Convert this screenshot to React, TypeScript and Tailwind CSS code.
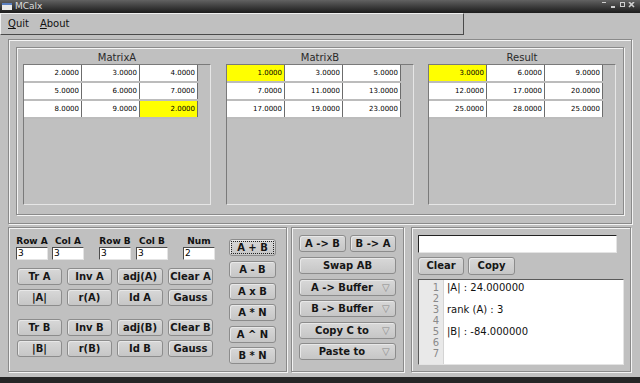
import React from "react"

const matA = [
  ["2.0000", "3.0000", "4.0000"],
  ["5.0000", "6.0000", "7.0000"],
  ["8.0000", "9.0000", "2.0000"],
]
const matB = [
  ["1.0000", "3.0000", "5.0000"],
  ["7.0000", "11.0000", "13.0000"],
  ["17.0000", "19.0000", "23.0000"],
]
const matC = [
  ["3.0000", "6.0000", "9.0000"],
  ["12.0000", "17.0000", "20.0000"],
  ["25.0000", "28.0000", "25.0000"],
]

const logLines = ["|A| : 24.000000", "", "rank (A) : 3", "", "|B| : -84.000000", "", ""]

// engraved frame like FLTK's FL_ENGRAVED_FRAME
const engraved = "border border-[#8a8a8a] shadow-[1px_1px_0_#f4f4f4,inset_1px_1px_0_#f4f4f4]"

function Btn({
  children,
  className = "",
  focus = false,
  menu = false,
}: {
  children: React.ReactNode
  className?: string
  focus?: boolean
  menu?: boolean
}) {
  return (
    <div
      className={`relative flex items-center rounded-[3px] border border-[#8c8c8c] bg-linear-to-b from-[#d8d8d8] to-[#c6c6c6] text-[10px] font-bold leading-none text-[#161616] shadow-[inset_1px_1px_0_#e8e8e8] ${className}`}
    >
      {menu ? (
        <>
          <span className="flex-1 text-center pl-[2px]">{children}</span>
          <span className="w-[13px] text-[10px] font-normal text-[#8a8a8a]">▽</span>
        </>
      ) : (
        <span className="flex-1 text-center">{children}</span>
      )}
      {focus && <div className="absolute inset-[1px] border border-dotted border-[#222]" />}
    </div>
  )
}

function Field({ value, className = "" }: { value: string; className?: string }) {
  return (
    <div
      className={`flex items-center bg-white border border-t-[#4c4c4c] border-l-[#4c4c4c] border-b-[#e4e4e4] border-r-[#e4e4e4] pl-[1px] text-[9px] leading-none text-black ${className}`}
    >
      {value}
    </div>
  )
}

function Matrix({ title, data, hl }: { title: string; data: string[][]; hl: [number, number] }) {
  return (
    <div className="flex flex-col w-[188px]">
      <div className="h-[16px] flex items-end justify-center pb-[1px] text-[10px] leading-none text-[#2a2a2a]">{title}</div>
      <div className="h-[141px] border border-t-[#7a7a7a] border-l-[#7a7a7a] border-b-[#e6e6e6] border-r-[#e6e6e6]">
        {data.map((row, r) => (
          <div key={r} className="flex h-[18px] w-[174px] border-b-2 border-[#bcbcbc]">
            {row.map((v, c) => (
              <div
                key={c}
                className={`w-[58px] flex items-center justify-end pr-[2px] border-r border-[#6c6c6c] text-[7px] leading-none text-black ${
                  hl[0] === r && hl[1] === c ? "bg-[#ffff00]" : "bg-white"
                }`}
              >
                {v}
              </div>
            ))}
          </div>
        ))}
      </div>
    </div>
  )
}

function Labeled({ label, value, className = "" }: { label: string; value: string; className?: string }) {
  return (
    <div className={`flex flex-col items-center w-[32px] ${className}`}>
      <div className="h-[9px] text-[9px] font-bold leading-none text-[#111] whitespace-nowrap">{label}</div>
      <Field value={value} className="mt-[1px] w-[32px] h-[13px]" />
    </div>
  )
}

export default function App() {
  return (
    <div className="w-[640px] h-[383px] flex flex-col bg-[#c0c0c0] font-['DejaVu_Sans',sans-serif] overflow-hidden">
      {/* Title bar */}
      <div className="h-[13px] flex items-center bg-linear-to-b from-[#626262] to-[#1c1c1c]">
        <svg width="10" height="7" viewBox="0 0 10 7" className="ml-[2px]">
          <rect x="0" y="0" width="10" height="7" fill="#e8e8e8" />
          <rect x="0" y="0" width="10" height="2" fill="#5a7fc0" />
        </svg>
        <span className="ml-[3px] text-[9px] leading-none text-[#dcdcdc]">MCalx</span>
        <svg width="36" height="9" viewBox="0 0 36 9" className="ml-auto mr-[4px]">
          <rect x="2" y="0" width="4" height="1" fill="#cfcfcf" />
          <rect x="11" y="4" width="4" height="2" fill="#cfcfcf" />
          <rect x="20.5" y="0.5" width="4" height="4" fill="none" stroke="#cfcfcf" />
          <path d="M29 0 L34 5 M34 0 L29 5" stroke="#cfcfcf" strokeWidth="1.6" />
        </svg>
      </div>

      {/* Menu bar */}
      <div className="h-[22px] flex">
        <div className="w-[464px] flex items-center border border-t-[#efefef] border-l-[#efefef] border-b-[#4a4a4a] border-r-[#4a4a4a] text-[10px] leading-none text-[#111]">
          <span className="ml-[7px]">
            <span className="underline">Q</span>uit
          </span>
          <span className="ml-[11px]">
            <span className="underline">A</span>bout
          </span>
        </div>
      </div>

      {/* Matrices */}
      <div className={`mt-[4px] ml-[8px] w-[624px] h-[185px] p-[7px] ${engraved}`}>
        <div className={`h-[168px] flex gap-[15px] pl-[6px] ${engraved}`}>
          <Matrix title="MatrixA" data={matA} hl={[2, 2]} />
          <Matrix title="MatrixB" data={matB} hl={[0, 0]} />
          <div className="-ml-[1px]">
            <Matrix title="Result" data={matC} hl={[0, 0]} />
          </div>
        </div>
      </div>

      {/* Lower controls */}
      <div className="mt-[3px] ml-[8px] h-[145px] flex">
        {/* Left: sizes and single-matrix ops */}
        <div className={`w-[279px] h-full flex ${engraved}`}>
          <div className="w-[206px] pl-[7px] pt-[9px] flex flex-col">
            <div className="flex">
              <Labeled label="Row A" value="3" />
              <Labeled label="Col A" value="3" className="ml-[4px]" />
              <Labeled label="Row B" value="3" className="ml-[15px]" />
              <Labeled label="Col B" value="3" className="ml-[5px]" />
              <Labeled label="Num" value="2" className="ml-[15px]" />
            </div>
            <div className="ml-[1px] mt-[8px] grid grid-cols-[45px_45px_46px_45px] gap-x-[5px] gap-y-[4px]">
              <Btn className="h-[17px]">Tr A</Btn>
              <Btn className="h-[17px]">Inv A</Btn>
              <Btn className="h-[17px]">adj(A)</Btn>
              <Btn className="h-[17px]">Clear A</Btn>
              <Btn className="h-[17px]">|A|</Btn>
              <Btn className="h-[17px]">r(A)</Btn>
              <Btn className="h-[17px]">Id A</Btn>
              <Btn className="h-[17px]">Gauss</Btn>
            </div>
            <div className="ml-[1px] mt-[13px] grid grid-cols-[45px_45px_46px_45px] gap-x-[5px] gap-y-[4px]">
              <Btn className="h-[17px]">Tr B</Btn>
              <Btn className="h-[17px]">Inv B</Btn>
              <Btn className="h-[17px]">adj(B)</Btn>
              <Btn className="h-[17px]">Clear B</Btn>
              <Btn className="h-[17px]">|B|</Btn>
              <Btn className="h-[17px]">r(B)</Btn>
              <Btn className="h-[17px]">Id B</Btn>
              <Btn className="h-[17px]">Gauss</Btn>
            </div>
          </div>
          <div className="ml-[14px] pt-[11px] flex flex-col w-[47px]">
            <Btn focus className="h-[17px]">A + B</Btn>
            <Btn className="h-[17px] mt-[5px]">A - B</Btn>
            <Btn className="h-[17px] mt-[5px]">A x B</Btn>
            <Btn className="h-[17px] mt-[4px]">A * N</Btn>
            <Btn className="h-[17px] mt-[5px]">A ^ N</Btn>
            <Btn className="h-[17px] mt-[4px]">B * N</Btn>
          </div>
        </div>

        {/* Middle: copy / buffer */}
        <div className={`ml-[4px] w-[113px] h-full pl-[7px] pt-[7px] flex flex-col ${engraved}`}>
          <div className="flex gap-[4px] w-[97px]">
            <Btn className="h-[17px] w-[47px]">A -&gt; B</Btn>
            <Btn className="h-[17px] w-[46px]">B -&gt; A</Btn>
          </div>
          <Btn className="h-[17px] w-[97px] mt-[5px]">Swap AB</Btn>
          <Btn menu className="h-[17px] w-[97px] mt-[5px]">A -&gt; Buffer</Btn>
          <Btn menu className="h-[17px] w-[97px] mt-[4px]">B -&gt; Buffer</Btn>
          <Btn menu className="h-[17px] w-[97px] mt-[5px]">Copy C to</Btn>
          <Btn menu className="h-[17px] w-[97px] mt-[4px]">Paste to</Btn>
        </div>

        {/* Right: output log */}
        <div className={`ml-[7px] w-[220px] h-full pl-[6px] pt-[7px] flex flex-col ${engraved}`}>
          <Field value="" className="w-[199px] h-[18px] border-t-[#222] border-l-[#222]" />
          <div className="flex gap-[4px] mt-[4px]">
            <Btn className="h-[18px] w-[46px]">Clear</Btn>
            <Btn className="h-[18px] w-[47px]">Copy</Btn>
          </div>
          <div className="mt-[4px] w-[206px] h-[86px] flex bg-white border border-t-[#5a5a5a] border-l-[#5a5a5a] border-b-[#e4e4e4] border-r-[#e4e4e4]">
            <div className="w-[25px] bg-[#e9e9e9] border-r border-[#d4d4d4] pt-[2px] pr-[4px] flex flex-col items-end text-[10px] leading-[11px] text-[#8a8a8a]">
              {logLines.map((_, i) => (
                <div key={i}>{i + 1}</div>
              ))}
            </div>
            <div className="pl-[3px] pt-[2px] flex flex-col text-[10px] leading-[11px] text-[#111]">
              {logLines.map((l, i) => (
                <div key={i} className="h-[11px] whitespace-pre">
                  {l}
                </div>
              ))}
            </div>
          </div>
        </div>
      </div>

      <div className="mt-auto h-[6px] bg-[#262626]" />
    </div>
  )
}
